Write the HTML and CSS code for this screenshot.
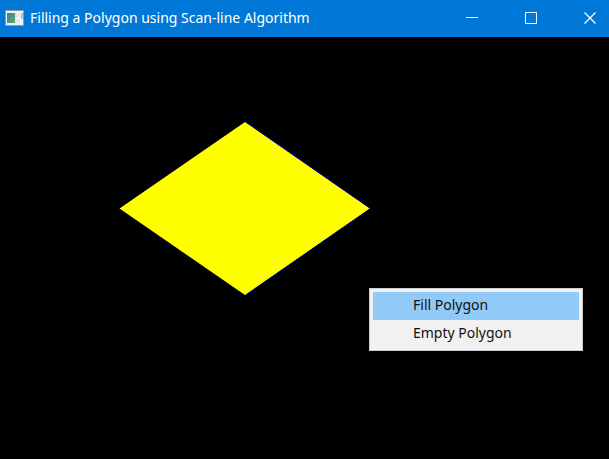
FILE: index.html
```html
<!DOCTYPE html>
<html lang="en">
<head>
<meta charset="utf-8">
<title>Filling a Polygon using Scan-line Algorithm</title>
<link rel="stylesheet" href="styles.css">
</head>
<body>
<header class="titlebar">
  <svg class="app-icon" width="20" height="16" viewBox="0 0 20 16" aria-hidden="true">
    <defs>
      <linearGradient id="pane" x1="0" y1="0" x2="1" y2="1">
        <stop offset="0" stop-color="#4179a0"/>
        <stop offset="1" stop-color="#58b06c"/>
      </linearGradient>
    </defs>
    <rect width="19" height="16" fill="#8b9aa6"/>
    <rect x="1" y="1" width="17" height="14" fill="#f2f2f2"/>
    <rect x="2" y="3" width="8" height="10" fill="url(#pane)"/>
    <rect x="10" y="3" width="5" height="10" fill="#e4e8e8"/>
    <rect x="16" y="3" width="2" height="6" fill="#a9c4bd"/>
    <rect x="11" y="8" width="4" height="1" fill="#ffffff"/>
  </svg>
  <h1 class="title">Filling a Polygon using Scan-line Algorithm</h1>
  <div class="controls">
    <button class="control" type="button" aria-label="Minimize">
      <svg width="13" height="13" viewBox="0 0 13 13"><path d="M0 5.5h12"/></svg>
    </button>
    <button class="control" type="button" aria-label="Maximize">
      <svg width="13" height="13" viewBox="0 0 13 13"><path d="M.5.5h11v11H.5z"/></svg>
    </button>
    <button class="control" type="button" aria-label="Close">
      <svg class="close" width="13" height="13" viewBox="0 0 13 13"><path d="M.5.5l11 11M11.5.5l-11 11"/></svg>
    </button>
  </div>
</header>
<main class="canvas">
  <svg class="drawing" width="380" height="280" viewBox="0 0 380 280" role="img" aria-label="Filled polygon">
    <path class="fill" d="M245 85L370 171.500 245 258 119.500 171.500z"/>
    <path class="edge" d="M246 85L370.500 171.500 246 258"/>
  </svg>
  <div class="menu" role="menu">
    <button class="item selected" type="button" role="menuitem">Fill Polygon</button>
    <button class="item" type="button" role="menuitem">Empty Polygon</button>
  </div>
</main>
</body>
</html>
```
FILE: styles.css
```css
* {
  box-sizing: border-box;
}

body {
  margin: 0;
  min-height: 100vh;
  display: flex;
  flex-direction: column;
  background: #000;
  font-family: "Noto Sans", "Open Sans", sans-serif;
}

.titlebar {
  display: flex;
  align-items: center;
  height: 37px;
  padding: 0 12px 0 5px;
  background: #0078d7;
  color: #fff;
}

.app-icon {
  flex: none;
  margin-bottom: 2px;
}

.title {
  flex: 1;
  margin: 0 0 2px 5px;
  font-size: 14px;
  font-weight: 400;
  line-height: 20px;
  white-space: nowrap;
}

.controls {
  display: flex;
  gap: 46px;
}

.control {
  display: block;
  padding: 0;
  border: 0;
  background: none;
}

.control svg {
  display: block;
  fill: none;
  stroke: #fff;
}

.control .close {
  stroke-width: 1.3;
}

.canvas {
  position: relative;
  flex: 1;
}

.drawing {
  display: block;
}

.edge {
  fill: none;
  stroke: #0000b4;
}

.fill {
  fill: #ff0;
}

.menu {
  position: absolute;
  left: 369px;
  top: 251px;
  width: 214px;
  padding: 3px 3px 2px;
  border: 1px solid #ccc;
  background: #f1f1f1;
}

.item {
  display: block;
  width: 100%;
  height: 28px;
  padding: 0 0 2px 40px;
  border: 0;
  background: none;
  color: #111;
  font: 14px/20px "Noto Sans", "Open Sans", sans-serif;
  text-align: left;
}

.selected {
  background: #91c9f7;
}
```
